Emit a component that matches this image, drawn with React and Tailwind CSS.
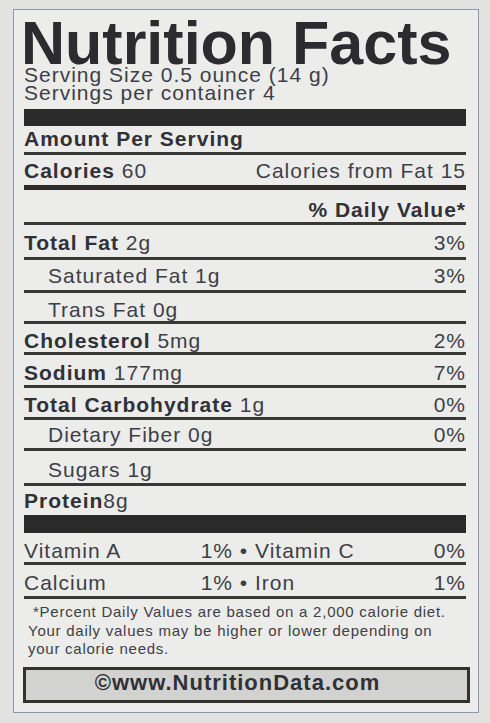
const rows = [
  { name: 'Total Fat', amt: '2g', dv: '3%', bold: true, cls: 'h-[35px] pb-1' },
  { name: 'Saturated Fat', amt: '1g', dv: '3%', sub: true, cls: 'h-[33px] pb-1' },
  { name: 'Trans Fat', amt: '0g', dv: '', sub: true, cls: 'h-[31px] pb-px' },
  { name: 'Cholesterol', amt: '5mg', dv: '2%', bold: true, cls: 'h-[31px] pb-px' },
  { name: 'Sodium', amt: '177mg', dv: '7%', bold: true, cls: 'h-[33px] pb-0.5' },
  { name: 'Total Carbohydrate', amt: '1g', dv: '0%', bold: true, cls: 'h-[32px] pb-0.5' },
  { name: 'Dietary Fiber', amt: '0g', dv: '0%', sub: true, cls: 'h-[31px] pb-[3px]' },
  { name: 'Sugars', amt: '1g', dv: '', sub: true, cls: 'h-[35px] pb-[3px]' },
]

const Line = ({ className, children }) => (
  <div className={`flex items-end justify-between leading-[21px] border-b-[3px] border-[#3a3836] ${className}`}>
    {children}
  </div>
)

const App = () => {
  return (
    <div className="h-[723px] w-[490px] overflow-hidden bg-[#e2e2e0] pt-[9px] font-['Liberation_Sans',Arial,sans-serif] text-[#3d3f47]">
      <div className="ml-[13px] w-[466px] border border-[#8c98b0] bg-[#ececea] pt-[10px] pb-[9px] pl-[10px] pr-[12px]">
        <h1 className="-ml-[3px] text-[61px] leading-[46px] font-bold text-[#2b2b30]">Nutrition Facts</h1>
        <div className="text-[21px] leading-[18px] tracking-[1px]">
          <div>Serving Size 0.5 ounce (14 g)</div>
          <div>Servings per container 4</div>
        </div>
        <div className="mt-[7px] h-[17px] bg-[#2b2a2a]"></div>

        <div className="text-[21px] tracking-[1px]">
          <Line className="h-[29px] pb-[3px]">
            <b className="font-bold text-[#303137]">Amount Per Serving</b>
          </Line>
          <div className="flex h-[35px] items-end justify-between border-b-[5px] border-[#2f2d2c] pb-1 leading-[21px]">
            <span><b className="font-bold text-[#303137]">Calories</b> 60</span>
            <span>Calories from Fat 15</span>
          </div>
          <Line className="h-[35px] justify-end pb-0.5">
            <b className="font-bold text-[#303137]">% Daily Value*</b>
          </Line>

          {rows.map((r, i) => (
            <Line key={i} className={r.cls}>
              <span className={r.sub ? 'pl-6' : ''}>
                {r.bold ? <b className="font-bold text-[#303137]">{r.name}</b> : r.name} {r.amt}
              </span>
              <span>{r.dv}</span>
            </Line>
          ))}
          <div className="flex h-[29px] items-end pb-1 leading-[21px]">
            <span><b className="font-bold text-[#303137]">Protein</b>8g</span>
          </div>
          <div className="h-[18px] bg-[#2b2a2a]"></div>

          <Line className="h-[32px] pb-px">
            <div className="flex w-[209px] justify-between">
              <span>Vitamin A</span>
              <span>1%</span>
            </div>
            <span className="w-[22px] text-center">•</span>
            <div className="flex flex-1 justify-between">
              <span>Vitamin C</span>
              <span>0%</span>
            </div>
          </Line>
          <Line className="h-[34px] pb-[3px]">
            <div className="flex w-[209px] justify-between">
              <span>Calcium</span>
              <span>1%</span>
            </div>
            <span className="w-[22px] text-center">•</span>
            <div className="flex flex-1 justify-between">
              <span>Iron</span>
              <span>1%</span>
            </div>
          </Line>
        </div>

        <div className="whitespace-nowrap pt-1 pl-1 text-[15px] leading-[18.5px] tracking-[0.75px]">
          <div className="pl-[5px]">*Percent Daily Values are based on a 2,000 calorie diet.</div>
          <div>Your daily values may be higher or lower depending on</div>
          <div>your calorie needs.</div>
        </div>

        <div className="-ml-px -mr-[4px] mt-[8.5px] h-[36px] border-[3px] border-[#34322f] bg-[#d2d2d0] pr-[18px] text-center text-[22px] leading-[25px] font-bold tracking-[1px] text-[#303137]">
          ©www.NutritionData.com
        </div>
      </div>
    </div>
  )
}

export default App
